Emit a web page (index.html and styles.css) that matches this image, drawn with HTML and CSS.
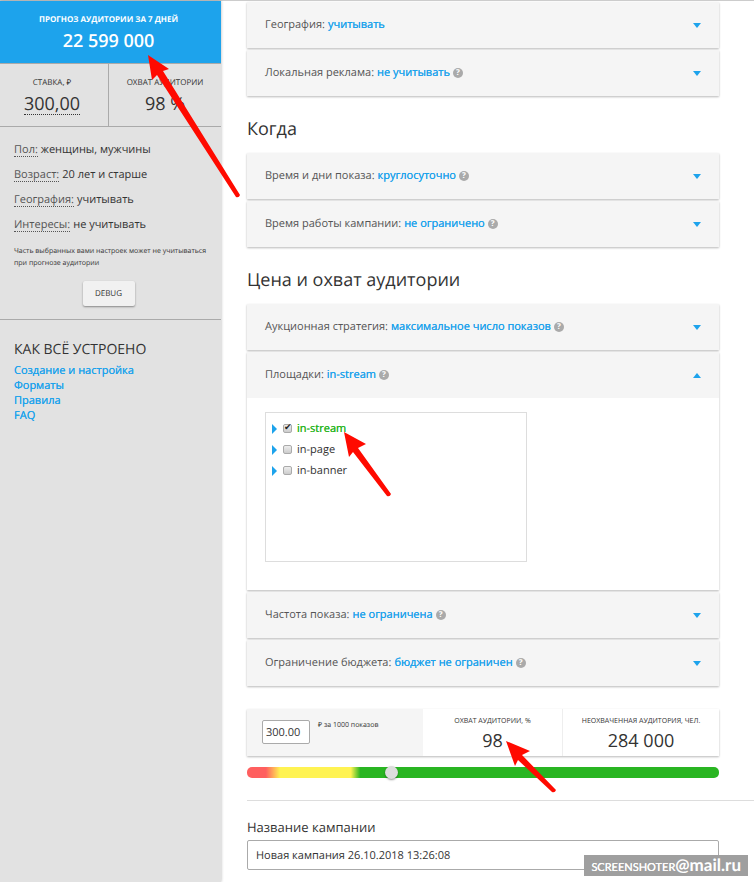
FILE: index.html
```html
<!DOCTYPE html>
<html lang="ru">

<head>
    <meta charset="UTF-8">
    <meta name="viewport" content="width=device-width, initial-scale=1.0">
    <title>Новая кампания</title>
    <link rel="stylesheet" href="styles.css">
</head>

<body>
    <div class="page">
        <aside class="sidebar">
            <div class="forecast">
                <p>ПРОГНОЗ АУДИТОРИИ ЗА 7 ДНЕЙ</p>
                <strong>22 599 000</strong>
            </div>
            <div class="rates">
                <div class="rate">
                    <p>СТАВКА, ₽</p>
                    <span class="num editable">300,00</span>
                </div>
                <div class="rate">
                    <p>ОХВАТ АУДИТОРИИ</p>
                    <span class="num">98 %</span>
                </div>
            </div>
            <div class="summary">
                <dl>
                    <div><dt>Пол:</dt><dd>женщины, мужчины</dd></div>
                    <div><dt>Возраст:</dt><dd>20 лет и старше</dd></div>
                    <div><dt>География:</dt><dd>учитывать</dd></div>
                    <div><dt>Интересы:</dt><dd>не учитывать</dd></div>
                </dl>
                <p class="note">Часть выбранных вами настроек может не учитываться при прогнозе аудитории</p>
                <button type="button" class="debug">DEBUG</button>
            </div>
            <nav class="help">
                <h3>КАК ВСЁ УСТРОЕНО</h3>
                <a href="#">Создание и настройка</a>
                <a href="#">Форматы</a>
                <a href="#">Правила</a>
                <a href="#">FAQ</a>
            </nav>
        </aside>

        <main class="content">
            <section class="group">
                <div class="card">
                    <button type="button" class="card-head"><span>География:</span><b>учитывать</b></button>
                </div>
                <div class="card">
                    <button type="button" class="card-head"><span>Локальная реклама:</span><b>не учитывать</b><i class="hint">?</i></button>
                </div>
            </section>

            <h2>Когда</h2>
            <section class="group">
                <div class="card">
                    <button type="button" class="card-head"><span>Время и дни показа:</span><b>круглосуточно</b><i class="hint">?</i></button>
                </div>
                <div class="card">
                    <button type="button" class="card-head"><span>Время работы кампании:</span><b>не ограничено</b><i class="hint">?</i></button>
                </div>
            </section>

            <h2>Цена и охват аудитории</h2>
            <section class="group">
                <div class="card">
                    <button type="button" class="card-head"><span>Аукционная стратегия:</span><b>максимальное число показов</b><i class="hint">?</i></button>
                </div>
                <div class="card">
                    <button type="button" class="card-head open" aria-expanded="true"><span>Площадки:</span><b>in-stream</b><i class="hint">?</i></button>
                    <div class="card-body">
                        <ul class="tree">
                            <li><label class="active"><input type="checkbox" checked>in-stream</label></li>
                            <li><label><input type="checkbox">in-page</label></li>
                            <li><label><input type="checkbox">in-banner</label></li>
                        </ul>
                    </div>
                </div>
                <div class="card">
                    <button type="button" class="card-head"><span>Частота показа:</span><b>не ограничена</b><i class="hint">?</i></button>
                </div>
                <div class="card">
                    <button type="button" class="card-head"><span>Ограничение бюджета:</span><b>бюджет не ограничен</b><i class="hint">?</i></button>
                </div>
            </section>

            <div class="price">
                <div class="price-bid">
                    <input type="text" id="bid" value="300.00">
                    <label for="bid">₽ за 1000 показов</label>
                </div>
                <div class="price-stat">
                    <p>ОХВАТ АУДИТОРИИ, %</p>
                    <span class="num">98</span>
                </div>
                <div class="price-stat">
                    <p>НЕОХВАЧЕННАЯ АУДИТОРИЯ, ЧЕЛ.</p>
                    <span class="num">284 000</span>
                </div>
            </div>
            <input type="range" class="slider" min="0" max="100" value="30" aria-label="Ставка">

            <div class="campaign">
                <label for="name">Название кампании</label>
                <input type="text" id="name" value="Новая кампания 26.10.2018 13:26:08">
            </div>
        </main>

        <!-- arrows over the page -->
        <svg class="arrows" width="754" height="882" viewBox="0 0 754 882" aria-hidden="true">
            <path d="M148 55L169 69L163 71L240 195Q239 198 236 197L157 75L152 80Z" />
            <path d="M344 432L366 444L358 448L391 494Q390 497 387 496L353 452L349 457Z" />
            <path d="M506 741L530 751L522 755L556 790Q555 793 552 792L518 760L515 766Z" />
        </svg>
        <div class="watermark"><span>SCREENSHOTER</span>@mail.ru</div>
    </div>
</body>

</html>
```
FILE: styles.css
```css
* {
    box-sizing: border-box;
}

body {
    margin: 0;
    background-color: #fff;
    color: #333;
    font-family: "Open Sans", "Noto Sans", sans-serif;
    font-size: 11px;
    line-height: 15px;
    text-rendering: geometricPrecision;
}

p, h2, h3, dl, dd, ul {
    margin: 0;
    padding: 0;
}

button, input {
    font: inherit;
    color: inherit;
    text-rendering: inherit;
}

a {
    color: #1da3ec;
    text-decoration: none;
}

.page {
    position: relative;
    display: flex;
    min-height: 100vh;
    border-top: 1px solid #ccc;
}

/* sidebar */
.sidebar {
    flex: 0 0 221px;
    background-color: #e2e2e2;
    box-shadow: 0 0 3px rgba(0, 0, 0, 0.3);
}

.forecast {
    padding: 11px 4px 9px 0;
    background-color: #1da3ec;
    color: #fff;
    text-align: center;
    line-height: 16px;
}

.forecast p {
    font-size: 8px;
    font-weight: 700;
}

.forecast strong {
    display: block;
    font-size: 18px;
    font-weight: 600;
    line-height: 26px;
}

.rates {
    display: grid;
    grid-template-columns: 109px 1fr;
    border-top: 1px solid #aaa;
    border-bottom: 1px solid #aaa;
    text-align: center;
}

.rate {
    padding: 11px 0 9px;
}

.rate:first-child {
    padding-right: 4px;
    border-right: 1px solid #aaa;
}

.rate p {
    font-size: 8px;
    line-height: 16px;
}

.num {
    display: inline-block;
    font-size: 18px;
    line-height: 26px;
}

.editable {
    line-height: 20px;
    margin: 3px 0 2px;
    border-bottom: 1px dotted #333;
}

.summary {
    padding: 17px 18px 13px 14px;
    border-bottom: 1px solid #aaa;
}

.summary dl > div {
    display: flex;
    gap: 3px;
    height: 25px;
    line-height: 12px;
}

.summary dt {
    height: 12px;
    border-bottom: 1px dotted #555;
    color: #555;
    box-sizing: content-box;
}

.note {
    font-size: 7px;
    line-height: 12px;
    margin: 2px -14px 0 0;
}

.debug {
    display: block;
    margin: 11px auto 0;
    width: 52px;
    height: 25px;
    padding: 0;
    border: 0;
    border-radius: 2px;
    background-color: #f1f1f1;
    box-shadow: 0 1px 2px rgba(0, 0, 0, 0.4);
    font-size: 8px;
}

.help {
    padding: 20px 14px;
}

.help h3 {
    margin-bottom: 3px;
    font-size: 14px;
    font-weight: 400;
    line-height: 20px;
}

.help a {
    display: block;
    text-shadow: 0 0 currentColor;
}

/* content */
.content {
    flex: 1;
    min-width: 0;
    padding: 1px 35px 12px 26px;
}

h2 {
    padding: 20px 0 11px;
    font-size: 18px;
    font-weight: 400;
    line-height: 26px;
}

.group {
    display: grid;
    gap: 2px;
}

.card {
    background-color: #fff;
    box-shadow: 0 1px 2px rgba(0, 0, 0, 0.28);
}

.card-head {
    display: flex;
    align-items: center;
    gap: 3px;
    width: 100%;
    height: 46px;
    padding: 0 18px;
    border: 0;
    background-color: #f5f5f5;
    color: #555;
    line-height: 16px;
    text-align: left;
}

.card-head b {
    color: #1da3ec;
    font-weight: 400;
    text-shadow: 0 0 currentColor;
}

.card-head::after {
    content: "";
    margin-left: auto;
    border: 4px solid transparent;
    border-top: 5px solid #1da3ec;
    border-bottom: 0;
}

.card-head.open::after {
    border-top: 0;
    border-bottom: 5px solid #1da3ec;
}

.hint {
    width: 10px;
    height: 10px;
    border-radius: 50%;
    background-color: #aaa;
    color: #fff;
    font-size: 8px;
    font-style: normal;
    font-weight: 700;
    line-height: 10px;
    text-align: center;
}

.card-body {
    padding: 14px 18px 28px;
}

.tree {
    max-width: 262px;
    min-height: 150px;
    padding: 5px 6px;
    border: 1px solid #ddd;
    list-style: none;
}

.tree li {
    display: flex;
    align-items: center;
    height: 21px;
}

.tree li::before {
    content: "";
    border: 5px solid transparent;
    border-left: 5px solid #1da3ec;
    border-right: 0;
}

.tree label {
    display: flex;
    align-items: center;
    gap: 5px;
    margin-left: 6px;
}

.tree .active {
    color: #29b522;
    text-shadow: 0 0 currentColor;
}

.tree input {
    appearance: none;
    display: flex;
    width: 9px;
    height: 9px;
    margin: 0;
    border: 1px solid #aaa;
    border-radius: 2px;
    background-image: linear-gradient(#eee, #ccc);
}

.tree input:checked::before {
    content: "✔";
    font-family: "DejaVu Sans", sans-serif;
    font-size: 9px;
    line-height: 7px;
    color: #222;
}

/* price */
.price {
    display: grid;
    grid-template-columns: 176fr 139fr 157fr;
    margin-top: 23px;
    background-color: #fff;
    box-shadow: 0 1px 2px rgba(0, 0, 0, 0.28);
}

.price-bid {
    display: flex;
    align-items: flex-start;
    gap: 8px;
    padding: 11px 15px 12px;
    background-color: #f5f5f5;
}

.price-bid input {
    width: 48px;
    height: 24px;
    padding: 0 3px;
    border: 1px solid #aaa;
    border-radius: 2px;
    background-color: #fff;
}

.price-bid label {
    font-size: 7px;
    line-height: 12px;
}

.price-stat {
    padding-top: 7px;
    text-align: center;
}

.price-stat + .price-stat {
    border-left: 1px solid #eee;
}

.price-stat p {
    font-size: 7px;
    line-height: 12px;
    white-space: nowrap;
}

.slider {
    appearance: none;
    display: block;
    width: 100%;
    height: 11px;
    margin: 11px 0 22px;
    border-radius: 5px;
    background-image: linear-gradient(to right, #ff5f5f 4%, #fff352 7%, #fff352 22%, #29b522 24%);
}

.slider::-webkit-slider-thumb {
    appearance: none;
    width: 13px;
    height: 13px;
    border-radius: 50%;
    background-color: #ddd;
    box-shadow: 0 1px 2px rgba(0, 0, 0, 0.4);
}

.campaign {
    margin-right: -35px;
    padding: 16px 35px 0 0;
    border-top: 1px solid #ddd;
}

.campaign label {
    display: block;
    margin-bottom: 3px;
    font-size: 13px;
    line-height: 20px;
}

.campaign input {
    display: block;
    width: 100%;
    height: 30px;
    padding: 0 8px;
    border: 1px solid #aaa;
    border-radius: 2px;
    background-color: #fff;
}

/* overlays */
.arrows {
    position: absolute;
    top: -1px;
    left: 0;
    fill: #ff0a00;
    pointer-events: none;
}

.watermark {
    position: absolute;
    right: 6px;
    bottom: 6px;
    height: 21px;
    padding: 0 7px;
    background-color: #9f9f9f;
    color: #fff;
    font-family: Lato, sans-serif;
    font-size: 17px;
    font-weight: 700;
    line-height: 20px;
}

.watermark span {
    font-size: 11px;
    font-weight: 400;
    text-shadow: 0 0 currentColor;
}
```
